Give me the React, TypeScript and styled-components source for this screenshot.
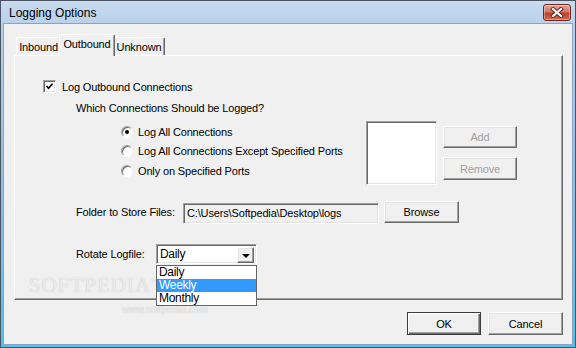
import React, { useState } from 'react';
import styled, { createGlobalStyle, css } from 'styled-components';

const GlobalStyle = createGlobalStyle`
  html, body {
    margin: 0;
    padding: 0;
    width: 576px;
    height: 348px;
    overflow: hidden;
    background: #f0f0f0;
    font-family: 'Liberation Sans', Arial, sans-serif;
    font-size: 11px;
    letter-spacing: -0.15px;
    color: #000;
  }
  * { box-sizing: border-box; }
`;

// classic 3D borders
const raised = css`
  background: #f0f0f0;
  border: 1px solid;
  border-color: #ffffff #696969 #696969 #ffffff;
  box-shadow: inset -1px -1px #a0a0a0, inset 1px 1px #e3e3e3;
`;

const sunken = css`
  border: 1px solid;
  border-color: #a0a0a0 #ffffff #ffffff #a0a0a0;
  box-shadow: inset 1px 1px #696969, inset -1px -1px #e3e3e3;
`;

const Window = styled.div`
  position: relative;
  width: 576px;
  height: 348px;
  border: 1px solid #4a5462;
  background: linear-gradient(to bottom, #c8dbef 0, #b9d1ea 22px, #8fbde6 55%, #4cc3e8 100%);
  padding: 0 2px 2px 2px;
  display: flex;
  flex-direction: column;
`;

const TitleBar = styled.div`
  height: 22px;
  display: flex;
  align-items: center;
  justify-content: space-between;
  padding: 1px 2px 0 6px;
`;

const Title = styled.span`
  font-size: 12px;
  letter-spacing: 0;
  color: #000;
`;

const CloseButton = styled.div`
  width: 28px;
  height: 17px;
  margin-top: -1px;
  border: 1px solid #6e2a22;
  border-radius: 3px;
  background: linear-gradient(to bottom, #e6a497 0, #d27565 45%, #c0412c 55%, #cf6a4f 100%);
  box-shadow: inset 0 0 0 1px rgba(255, 255, 255, 0.35);
  display: flex;
  align-items: center;
  justify-content: center;
`;

const Client = styled.div`
  flex: 1;
  background: #f0f0f0;
  border: 1px solid #8aa3bf;
  padding: 10px 9px 0 10px;
  display: flex;
  flex-direction: column;
`;

const TabStrip = styled.div`
  display: flex;
  align-items: flex-end;
  height: 21px;
  padding-left: 2px;
`;

const Tab = styled.div<{ $active?: boolean; $w: number }>`
  position: relative;
  width: ${p => p.$w}px;
  height: 18px;
  background: #f0f0f0;
  border-top: 1px solid #ffffff;
  border-left: 1px solid #ffffff;
  border-right: 1px solid #696969;
  box-shadow: inset -1px 0 #a0a0a0;
  border-radius: 2px 2px 0 0;
  display: flex;
  justify-content: center;
  padding-top: 3px;
  ${p =>
    p.$active &&
    css`
      z-index: 2;
      height: 22px;
      margin: 0 -2px -1px -2px;
      width: ${p.$w + 4}px;
      padding-top: 3px;
    `}
`;

const Panel = styled.div`
  position: relative;
  height: 245px;
  border: 1px solid;
  border-color: #ffffff #696969 #696969 #ffffff;
  box-shadow: inset -1px -1px #a0a0a0;
  padding-left: 28px;
  display: flex;
  flex-direction: column;
`;

const CheckRow = styled.label`
  display: flex;
  align-items: center;
  gap: 6px;
  height: 13px;
  margin-top: 24px;
`;

const CheckBox = styled.span`
  ${sunken};
  width: 13px;
  height: 13px;
  background: #fff;
  display: flex;
  align-items: center;
  justify-content: center;
`;

const Label = styled.div<{ $w?: number }>`
  margin-left: 33px;
  height: 14px;
  display: flex;
  align-items: center;
  ${p => p.$w && `width: ${p.$w}px;`}
`;

const Question = styled(Label)`
  margin-top: 8px;
`;

const OptionsRow = styled.div`
  display: flex;
  height: 64px;
  margin-top: 6px;
`;

const RadioColumn = styled.div`
  margin-left: 78px;
  width: 245px;
  padding-top: 1px;
  display: flex;
  flex-direction: column;
`;

const RadioRow = styled.div`
  display: flex;
  align-items: center;
  gap: 5px;
  height: 19.5px;
  cursor: default;
`;

const Radio = styled.span<{ $on?: boolean }>`
  position: relative;
  width: 12px;
  height: 12px;
  border-radius: 50%;
  background: #fff;
  border: 1px solid;
  border-color: #a0a0a0 #f4f4f4 #ffffff #a0a0a0;
  box-shadow: inset 1px 1px #696969;
  ${p =>
    p.$on &&
    css`
      &::after {
        content: '';
        position: absolute;
        left: 3px;
        top: 3px;
        width: 4px;
        height: 4px;
        border-radius: 50%;
        background: #000;
      }
    `}
`;

const ListBox = styled.div`
  ${sunken};
  width: 71px;
  height: 64px;
  background: #fff;
`;

const SideButtons = styled.div`
  margin-left: 6px;
  padding-top: 5px;
  display: flex;
  flex-direction: column;
  gap: 9px;
`;

const Button = styled.button<{ $w?: number; $h?: number; $default?: boolean }>`
  ${raised};
  width: ${p => p.$w || 75}px;
  height: ${p => p.$h || 23}px;
  font-family: inherit;
  font-size: 11px;
  letter-spacing: -0.15px;
  color: #000;
  padding: 0;
  cursor: default;
  &:disabled {
    color: #a0a0a0;
  }
  ${p =>
    p.$default &&
    css`
      border: 1px solid #3c3c3c;
      box-shadow: inset 1px 1px #ffffff, inset -1px -1px #696969, inset -2px -2px #a0a0a0;
    `}
`;

const FieldRow = styled.div<{ $top: number }>`
  position: relative;
  z-index: 3;
  display: flex;
  align-items: center;
  height: 22px;
  margin-top: ${p => p.$top}px;
`;

const TextField = styled.div`
  ${sunken};
  width: 196px;
  height: 21px;
  margin-top: 2px;
  background: #f0f0f0;
  padding: 3px 0 0 3px;
  white-space: nowrap;
`;

const Combo = styled.div`
  ${sunken};
  position: relative;
  width: 101px;
  height: 20px;
  background: #fff;
  display: flex;
  align-items: center;
  padding-left: 3px;
  font-size: 12px;
  letter-spacing: -0.3px;
`;

const ComboArrow = styled.span`
  ${raised};
  position: absolute;
  right: 2px;
  top: 2px;
  width: 17px;
  height: 16px;
  display: flex;
  align-items: center;
  justify-content: center;
  &::after {
    content: '';
    border-left: 4px solid transparent;
    border-right: 4px solid transparent;
    border-top: 4px solid #000;
    margin-top: 1px;
  }
`;

const DropList = styled.div`
  position: absolute;
  z-index: 8;
  left: -1px;
  top: 20px;
  width: 101px;
  border: 1px solid #646464;
  background: #fff;
`;

const DropItem = styled.div<{ $sel?: boolean }>`
  height: 13px;
  line-height: 13px;
  padding-left: 2px;
  font-size: 12px;
  letter-spacing: -0.3px;
  background: ${p => (p.$sel ? '#3399ff' : '#fff')};
  color: ${p => (p.$sel ? '#fff' : '#000')};
`;

const Footer = styled.div`
  display: flex;
  justify-content: flex-end;
  gap: 7px;
  margin-top: 12px;
`;

// faint site watermark lying over the dialog
const Watermark = styled.div<{ $x: number; $y: number; $small?: boolean }>`
  position: absolute;
  z-index: 1;
  left: ${p => p.$x}px;
  top: ${p => p.$y}px;
  pointer-events: none;
  white-space: nowrap;
  color: rgba(255, 255, 255, 0.75);
  text-shadow: 0 0 1px rgba(0, 0, 0, 0.28);
  font-family: ${p => (p.$small ? "'Liberation Sans', sans-serif" : "'Liberation Serif', serif")};
  font-size: ${p => (p.$small ? 10 : 21)}px;
  letter-spacing: ${p => (p.$small ? 0 : 1)}px;
  line-height: ${p => (p.$small ? 10 : 22)}px;
  sup { font-size: 7px; font-family: 'Liberation Sans', sans-serif; }
`;

const options = [
  'Log All Connections',
  'Log All Connections Except Specified Ports',
  'Only on Specified Ports',
];

const rotations = ['Daily', 'Weekly', 'Monthly'];

const App: React.FC = () => {
  const [mode, setMode] = useState(0);
  const [logOut, setLogOut] = useState(true);

  return (
    <>
      <GlobalStyle />
      <Window>
        <TitleBar>
          <Title>Logging Options</Title>
          <CloseButton>
            <svg width="14" height="11" viewBox="0 0 14 11">
              <path d="M3 2 L11 9 M11 2 L3 9" stroke="#5a2a24" strokeWidth="4" strokeLinecap="square" />
              <path d="M3 2 L11 9 M11 2 L3 9" stroke="#ffffff" strokeWidth="2.2" strokeLinecap="square" />
            </svg>
          </CloseButton>
        </TitleBar>
        <Client>
          <TabStrip>
            <Tab $w={45}>Inbound</Tab>
            <Tab $w={52} $active>Outbound</Tab>
            <Tab $w={52}>Unknown</Tab>
          </TabStrip>
          <Panel>
            <CheckRow onClick={() => setLogOut(!logOut)}>
              <CheckBox>
                {logOut && (
                  <svg width="9" height="9" viewBox="0 0 9 9">
                    <path d="M1.5 4 L3.5 6.2 L7.5 1.8" fill="none" stroke="#000" strokeWidth="1.7" />
                  </svg>
                )}
              </CheckBox>
              Log Outbound Connections
            </CheckRow>
            <Question>Which Connections Should be Logged?</Question>
            <OptionsRow>
              <RadioColumn>
                {options.map((o, i) => (
                  <RadioRow key={o} onClick={() => setMode(i)}>
                    <Radio $on={mode === i} />
                    {o}
                  </RadioRow>
                ))}
              </RadioColumn>
              <ListBox />
              <SideButtons>
                <Button $w={74} $h={22} disabled>Add</Button>
                <Button $w={74} $h={23} disabled>Remove</Button>
              </SideButtons>
            </OptionsRow>
            <FieldRow $top={16}>
              <Label $w={107}>Folder to Store Files:</Label>
              <TextField>C:\Users\Softpedia\Desktop\logs</TextField>
              <Button $w={75} $h={22} style={{ marginLeft: 5 }}>Browse</Button>
            </FieldRow>
            <FieldRow $top={20}>
              <Label $w={80}>Rotate Logfile:</Label>
              <Combo>
                Daily
                <ComboArrow />
                <DropList>
                  {rotations.map(r => (
                    <DropItem key={r} $sel={r === 'Weekly'}>{r}</DropItem>
                  ))}
                </DropList>
              </Combo>
            </FieldRow>
          </Panel>
          <Footer>
            <Button $w={74} $default>OK</Button>
            <Button $w={75}>Cancel</Button>
          </Footer>
        </Client>
        <Watermark $x={28} $y={270}>SOFTPEDIA<sup>™</sup></Watermark>
        <Watermark $x={121} $y={304} $small>www.softpedia.com</Watermark>
      </Window>
    </>
  );
};

export default App;
